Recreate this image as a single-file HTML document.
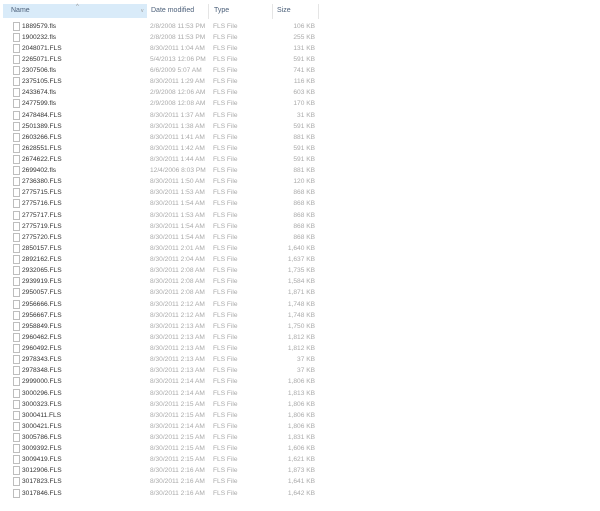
<!DOCTYPE html>
<html><head><style>
body{margin:0;width:600px;height:511px;background:#fff;font-family:"Liberation Sans",sans-serif;position:relative;overflow:hidden}
.hd{position:absolute;top:4px;height:14px;font-size:7px;line-height:14px;color:#4c607a}
.sep{position:absolute;top:4px;width:1px;height:15px;background:#e5e5e5}
.r{position:absolute;left:0;width:330px;height:11px;font-size:6.6px;line-height:11px;color:#aaa}
.r span{position:absolute;white-space:nowrap}
.n{left:22px;color:#333}
.d{left:150px}.t{left:213px}.s{right:15px;text-align:right}
.ic{position:absolute;left:13px;top:1px;width:5px;height:7px;border:1px solid #bdbdbd;background:#fff}
</style></head><body>
<div style="position:absolute;left:3px;top:4px;width:144px;height:14px;background:#d9ebf9"></div>
<div class="hd" style="left:11px">Name</div>
<div class="hd" style="left:76px;top:0;font-size:6px;color:#999">^</div>
<div class="hd" style="left:141px;font-size:5px;color:#999">v</div>
<div class="hd" style="left:151px">Date modified</div>
<div class="hd" style="left:214px">Type</div>
<div class="hd" style="left:277px">Size</div>
<div class="sep" style="left:208px"></div><div class="sep" style="left:272px"></div><div class="sep" style="left:318px"></div>
<div id="L"></div>
<script>
var d=[["1889579.fls","2/8/2008 11:53 PM","106 KB"],["1900232.fls","2/8/2008 11:53 PM","255 KB"],["2048071.FLS","8/30/2011 1:04 AM","131 KB"],["2265071.FLS","5/4/2013 12:06 PM","591 KB"],["2307506.fls","6/6/2009 5:07 AM","741 KB"],["2375105.FLS","8/30/2011 1:29 AM","116 KB"],["2433674.fls","2/9/2008 12:06 AM","603 KB"],["2477599.fls","2/9/2008 12:08 AM","170 KB"],["2478484.FLS","8/30/2011 1:37 AM","31 KB"],["2501389.FLS","8/30/2011 1:38 AM","591 KB"],["2603266.FLS","8/30/2011 1:41 AM","881 KB"],["2628551.FLS","8/30/2011 1:42 AM","591 KB"],["2674622.FLS","8/30/2011 1:44 AM","591 KB"],["2699402.fls","12/4/2006 8:03 PM","881 KB"],["2736380.FLS","8/30/2011 1:50 AM","120 KB"],["2775715.FLS","8/30/2011 1:53 AM","868 KB"],["2775716.FLS","8/30/2011 1:54 AM","868 KB"],["2775717.FLS","8/30/2011 1:53 AM","868 KB"],["2775719.FLS","8/30/2011 1:54 AM","868 KB"],["2775720.FLS","8/30/2011 1:54 AM","868 KB"],["2850157.FLS","8/30/2011 2:01 AM","1,640 KB"],["2892162.FLS","8/30/2011 2:04 AM","1,637 KB"],["2932065.FLS","8/30/2011 2:08 AM","1,735 KB"],["2939919.FLS","8/30/2011 2:08 AM","1,584 KB"],["2950057.FLS","8/30/2011 2:08 AM","1,871 KB"],["2956666.FLS","8/30/2011 2:12 AM","1,748 KB"],["2956667.FLS","8/30/2011 2:12 AM","1,748 KB"],["2958849.FLS","8/30/2011 2:13 AM","1,750 KB"],["2960462.FLS","8/30/2011 2:13 AM","1,812 KB"],["2960492.FLS","8/30/2011 2:13 AM","1,812 KB"],["2978343.FLS","8/30/2011 2:13 AM","37 KB"],["2978348.FLS","8/30/2011 2:13 AM","37 KB"],["2999000.FLS","8/30/2011 2:14 AM","1,806 KB"],["3000296.FLS","8/30/2011 2:14 AM","1,813 KB"],["3000323.FLS","8/30/2011 2:15 AM","1,806 KB"],["3000411.FLS","8/30/2011 2:15 AM","1,806 KB"],["3000421.FLS","8/30/2011 2:14 AM","1,806 KB"],["3005786.FLS","8/30/2011 2:15 AM","1,831 KB"],["3009392.FLS","8/30/2011 2:15 AM","1,606 KB"],["3009419.FLS","8/30/2011 2:15 AM","1,621 KB"],["3012906.FLS","8/30/2011 2:16 AM","1,873 KB"],["3017823.FLS","8/30/2011 2:16 AM","1,641 KB"],["3017846.FLS","8/30/2011 2:16 AM","1,642 KB"]];
var h="";d.forEach(function(r,i){h+='<div class="r" style="top:'+(20.5+i*11.12).toFixed(1)+'px"><div class="ic"></div><span class="n">'+r[0]+'</span><span class="d">'+r[1]+'</span><span class="t">FLS File</span><span class="s">'+r[2]+'</span></div>'});
document.getElementById("L").innerHTML=h;
</script>
</body></html>
